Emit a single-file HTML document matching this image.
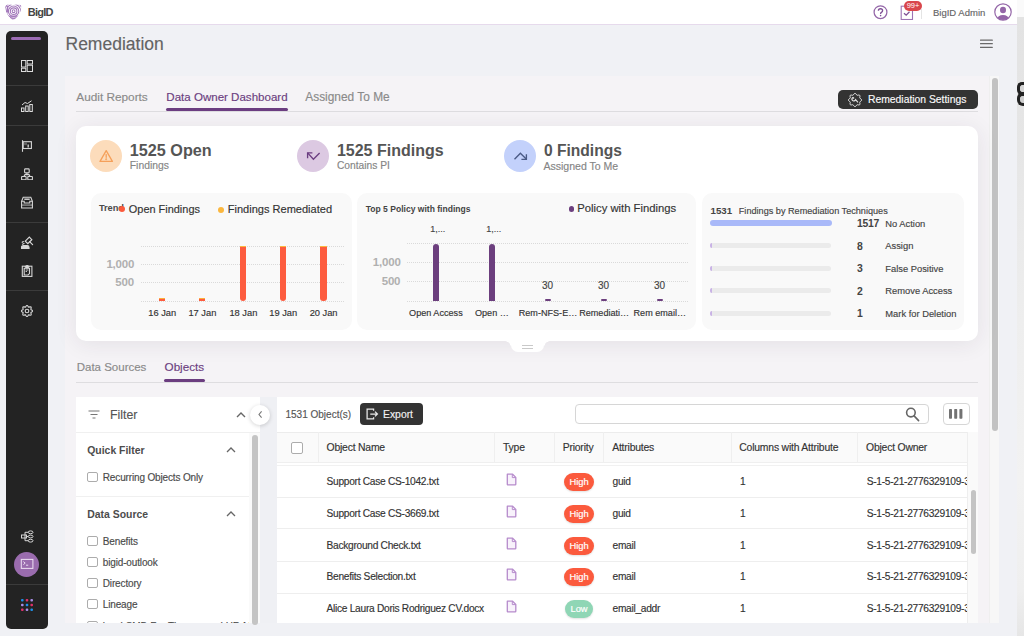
<!DOCTYPE html>
<html><head><meta charset="utf-8">
<style>
*{box-sizing:border-box;margin:0;padding:0}
html,body{width:1024px;height:636px;overflow:hidden}
body{position:relative;background:#f0f1f5;font-family:"Liberation Sans",sans-serif;color:#333}
.a{position:absolute;white-space:nowrap;line-height:1}
.t{-webkit-text-stroke:0.15px currentColor}
.b{font-weight:700}
#top{position:absolute;left:0;top:0;width:1017px;height:25px;background:#fff;border-bottom:1px solid #e6daec}
#rstrip{position:absolute;left:1017px;top:0;width:7px;height:636px;background:linear-gradient(#fafafa 0 17px,#e3e3e3 17px,#e6e6e6 150px,#eeeeee 320px,#f2f2f2 480px,#efefef 590px,#e6e6e6 636px)}
#side{position:absolute;left:6px;top:31px;width:42px;height:598px;background:#232323;border-radius:5px}
.sep{position:absolute;left:0;width:42px;height:1px;background:#3b3b3b}
#panel{position:absolute;left:65px;top:76px;width:925px;height:547px;background:#f5f3f6}
.card{position:absolute;background:#fff;border-radius:10px}
.cc{position:absolute;background:#f9f9f9;border-radius:10px}
.grid{position:absolute;height:1px;background:repeating-linear-gradient(to right,#dadada 0 1px,transparent 1px 2px)}
.bar{position:absolute;border-radius:0 0 3px 3px}
.pbar{position:absolute;background:#6c3f7e;border-radius:3px 3px 0 0}
.tbar{position:absolute;left:710px;width:121px;height:5px;border-radius:3px;background:#ebebeb}
.cb{position:absolute;width:11px;height:11px;border:1.25px solid #acacac;border-radius:2px;background:#fff}
.pill{position:absolute;left:564px;width:30px;height:18px;border-radius:9px;color:#fff;font-size:9.3px;text-align:center;line-height:18px;-webkit-text-stroke:0.2px #fff;box-shadow:0 1px 2px rgba(0,0,0,0.12)}
.hi{background:#fb5a3d}
.lo{background:#8fd6b5;left:565px;width:28px}
.vline{position:absolute;width:1px;background:#efefef}
.hline{position:absolute;height:1px;background:#ececec}
</style></head><body>

<div id="top"></div>
<div id="rstrip"></div><div class="a" style="left:1017px;top:0;width:7px;height:17px;background:#fafafa"></div>
<div class="a" style="left:1016.8px;top:82.3px;width:9px;height:12.5px;border:3px solid #222;border-right:none;border-radius:5px 0 0 5px;background:#d5d5d5"></div><div class="a" style="left:1016.8px;top:93px;width:9px;height:13px;border:3px solid #222;border-right:none;border-radius:5px 0 0 6px;background:#cfcfcf"></div>

<!-- logo -->
<svg class="a" style="left:5.4px;top:3.8px" width="16.4" height="16" viewBox="0 0 16.4 16">
  <defs><clipPath id="hc"><path d="M0.2 1.6 Q4 -0.6 8.2 1.3 Q12.4 -0.6 16.2 1.6 L16 5.5 Q14.8 11.5 8.2 16.3 Q1.6 11.5 0.4 5.5Z"/></clipPath></defs>
  <g clip-path="url(#hc)" fill="none" stroke="#a277ba" stroke-width="1.1">
    <circle cx="8.6" cy="7.2" r="1.4"/><circle cx="8.6" cy="7.2" r="3.3"/><circle cx="8.6" cy="7.2" r="5.2"/><circle cx="8.6" cy="7.2" r="7.1"/><circle cx="8.6" cy="7.2" r="9"/>
    <path d="M2.6 2V8.5"/><path d="M3 12.2H13.5M5 14.2H11.5"/>
  </g>
</svg>
<div class="a b" style="left:27.7px;top:6.9px;font-size:11px;color:#454545;letter-spacing:-0.75px">BigID</div>

<!-- top right -->
<svg class="a" style="left:873px;top:4.8px" width="15" height="15" viewBox="0 0 15 15"><circle cx="7.5" cy="7.2" r="6.4" fill="none" stroke="#9466a8" stroke-width="1.25"/><path d="M5.4 5.7Q5.4 3.7 7.5 3.7Q9.6 3.7 9.6 5.6Q9.6 6.8 8.4 7.4Q7.6 7.8 7.6 8.9" fill="none" stroke="#7f5196" stroke-width="1.35"/><circle cx="7.6" cy="10.6" r="0.8" fill="#7f5196"/></svg>
<svg class="a" style="left:899.5px;top:4.6px" width="14" height="15" viewBox="0 0 14 15" fill="none" stroke="#9d73b4" stroke-width="1.1"><rect x="1.2" y="1.2" width="11.3" height="13.3"/><path d="M4 8.2L6.2 10.2L9.5 6.8" stroke="#7f5196" stroke-width="1.3"/></svg>
<div class="a" style="left:904px;top:1px;width:18px;height:10px;border-radius:5px;background:#d9474c;color:#fff;font-size:7.5px;line-height:10px;text-align:center">99+</div>
<div class="a" style="left:921px;top:9px;width:1px;height:10px;background:#e4e4e4"></div>
<div class="a t" style="left:933px;top:8px;font-size:9.5px;color:#666">BigID Admin</div>
<svg class="a" style="left:994px;top:3px" width="18" height="18" viewBox="0 0 18 18">
  <defs><clipPath id="av"><circle cx="9" cy="9" r="8"/></clipPath></defs>
  <circle cx="9" cy="9" r="8.2" fill="#fff" stroke="#9466a8" stroke-width="1.2"/>
  <g clip-path="url(#av)" fill="#9466a8">
    <ellipse cx="9" cy="7" rx="3" ry="3.3"/>
    <ellipse cx="9" cy="16.5" rx="6" ry="4.5"/>
  </g>
</svg>

<!-- sidebar -->
<div id="side">
  <div class="a" style="left:5px;top:6px;width:30px;height:3px;border-radius:2px;background:#9b6bb4"></div>
  <div class="sep" style="top:54px"></div>
  <div class="sep" style="top:94px"></div>
  <div class="sep" style="top:191px"></div>
  <div class="sep" style="top:259px"></div>
  <div class="sep" style="top:553px"></div>
</div>
<svg class="a" style="left:21px;top:60px" width="12" height="12" viewBox="0 0 12 12" fill="none" stroke="#ddd" stroke-width="1">
  <rect x="0.5" y="0.5" width="4.3" height="6.5"/><rect x="6.2" y="0.5" width="5.3" height="3.5"/><rect x="0.5" y="8.2" width="4.3" height="3.3"/><rect x="6.2" y="5.2" width="5.3" height="6.3"/>
</svg>
<svg class="a" style="left:21px;top:100px" width="12" height="12" viewBox="0 0 12 12" fill="none" stroke="#ddd" stroke-width="1">
  <rect x="0.5" y="8" width="2.5" height="3.5"/><rect x="4.7" y="6" width="2.5" height="5.5"/><rect x="8.8" y="4.5" width="2.5" height="7"/><path d="M1 5L4 2.5L6.5 3.5L10.5 0.8"/>
</svg>
<svg class="a" style="left:21px;top:140px" width="12" height="12" viewBox="0 0 12 12" fill="none" stroke="#d6d6d6" stroke-width="1.1"><path d="M1.5 0.2V11.8"/><rect x="2.2" y="1.7" width="8.2" height="6.8"/><rect x="3" y="2.6" width="3" height="2.6" fill="#d6d6d6" stroke="none" opacity="0.35"/><path d="M7.2 4.5V7.5" stroke-width="1.3"/></svg>
<svg class="a" style="left:21px;top:168px" width="12" height="12" viewBox="0 0 12 12" fill="none" stroke="#d6d6d6" stroke-width="1.1"><rect x="3.6" y="0.9" width="4.6" height="4" rx="0.8"/><rect x="0.6" y="8.5" width="4.5" height="3.3" rx="0.5"/><rect x="6.8" y="8.5" width="4.6" height="3.3" rx="0.5"/><path d="M5.9 4.9V6.6M2.8 8.5L4 6.6H8L9.1 8.5"/></svg>
<svg class="a" style="left:21px;top:196px" width="12" height="13" viewBox="0 0 12 13" fill="none" stroke="#d6d6d6" stroke-width="1.1"><path d="M2.2 1.2H9.8L11.4 5.3V12H0.6V5.3Z"/><path d="M0.6 5.3H3.2V7H8.8V5.3H11.4"/><path d="M3.3 3.2H8.7" stroke-width="1.4"/><rect x="0.6" y="8.3" width="10.8" height="1.6" fill="#d6d6d6" stroke="none" opacity="0.5"/></svg>
<svg class="a" style="left:21px;top:236px" width="13" height="13" viewBox="0 0 13 13" fill="none" stroke="#d6d6d6" stroke-width="1.2" stroke-linecap="round"><path d="M4.3 5.2L8.3 1.2L10.8 3.7L6.8 7.7Z"/><path d="M8.6 5.6L11.6 8.6"/><path d="M1.2 6.3L2.3 5.6M1.5 8.2L3 7.5"/><path d="M0.5 12.6V11.5Q0.5 9.7 2.3 9.7H6.2Q8 9.7 8 11.5V12.6Z" fill="#d6d6d6"/></svg>
<svg class="a" style="left:21px;top:265px" width="12" height="12" viewBox="0 0 12 12" fill="none" stroke="#d6d6d6" stroke-width="1.1"><rect x="1.3" y="1.2" width="9.6" height="10.2"/><path d="M4.2 1.4L6.1 0.5L8 1.4L7.2 2.6H5Z" fill="#d6d6d6"/><path d="M3.2 3.2H8.5V8.6L7 10H3.2Z"/><path d="M4.6 5H7.4M4.6 6.5H6" stroke-width="0.9"/></svg>
<svg class="a" style="left:21px;top:305px" width="12" height="12" viewBox="0 0 12 12" fill="none" stroke="#d6d6d6" stroke-width="1.1"><path d="M11.6 6.0L11.4 6.5L10.8 7.0L10.2 7.3L9.9 7.6L9.9 8.1L10.1 8.7L10.2 9.4L10.0 10.0L9.4 10.2L8.7 10.1L8.1 9.9L7.6 9.9L7.3 10.2L7.0 10.8L6.5 11.4L6.0 11.6L5.5 11.4L5.0 10.8L4.7 10.2L4.4 9.9L3.9 9.9L3.3 10.1L2.6 10.2L2.0 10.0L1.8 9.4L1.9 8.7L2.1 8.1L2.1 7.6L1.8 7.3L1.2 7.0L0.6 6.5L0.4 6.0L0.6 5.5L1.2 5.0L1.8 4.7L2.1 4.4L2.1 3.9L1.9 3.3L1.8 2.6L2.0 2.0L2.6 1.8L3.3 1.9L3.9 2.1L4.4 2.1L4.7 1.8L5.0 1.2L5.5 0.6L6.0 0.4L6.5 0.6L7.0 1.2L7.3 1.8L7.6 2.1L8.1 2.1L8.7 1.9L9.4 1.8L10.0 2.0L10.2 2.6L10.1 3.3L9.9 3.9L9.9 4.4L10.2 4.7L10.8 5.0L11.4 5.5Z"/><circle cx="6" cy="6" r="1.8"/></svg>
<svg class="a" style="left:21px;top:530px" width="13" height="13" viewBox="0 0 13 13" fill="none" stroke="#d6d6d6" stroke-width="1"><rect x="0.5" y="5" width="5" height="3"/><path d="M5.5 6.5H9M4 2.3V10.7H9M4 2.3H9"/><ellipse cx="9.6" cy="2.3" rx="2.4" ry="1.4" fill="#222"/><ellipse cx="9.6" cy="6.5" rx="2.4" ry="1.4" fill="#222"/><ellipse cx="9.6" cy="10.7" rx="2.4" ry="1.4" fill="#222"/></svg>
<div class="a" style="left:14px;top:552px;width:25px;height:25px;border-radius:50%;background:#9a6cae"></div>
<svg class="a" style="left:20px;top:558px" width="14" height="12" viewBox="0 0 14 12" fill="none" stroke="#eadcf0" stroke-width="1.05"><rect x="1.3" y="1.4" width="11.6" height="9"/><path d="M3.4 3.6L5.2 5.1L3.4 6.6" stroke-width="1"/><path d="M6 7.2H8.2" stroke-width="1"/></svg>
<svg class="a" style="left:21px;top:599px" width="12" height="12" viewBox="0 0 12 12">
  <rect x="0" y="0" width="2.6" height="2.6" rx="1" fill="#1e90e8"/><rect x="4.7" y="0" width="2.6" height="2.6" rx="1" fill="#e0306a"/><rect x="9.4" y="0" width="2.6" height="2.6" rx="1" fill="#a88ee8"/>
  <rect x="0" y="4.7" width="2.6" height="2.6" rx="1" fill="#a88ee8"/><rect x="4.7" y="4.7" width="2.6" height="2.6" rx="1" fill="#1e90e8"/><rect x="9.4" y="4.7" width="2.6" height="2.6" rx="1" fill="#e0306a"/>
  <rect x="0" y="9.4" width="2.6" height="2.6" rx="1" fill="#e0306a"/><rect x="4.7" y="9.4" width="2.6" height="2.6" rx="1" fill="#a88ee8"/><rect x="9.4" y="9.4" width="2.6" height="2.6" rx="1" fill="#1e90e8"/>
</svg>

<!-- title -->
<div class="a t" style="left:65.5px;top:36.1px;font-size:17.5px;color:#636363">Remediation</div>
<svg class="a" style="left:979.5px;top:38px" width="13" height="11" viewBox="0 0 13 11" stroke="#6a6a6a" stroke-width="1.3" stroke-linecap="round">
  <path d="M0.5 2.2H12.3M0.5 5.7H12.3M0.5 9.3H12.3"/>
</svg>

<!-- panel -->
<div id="panel"></div>


<!-- tabs -->
<div class="a t" style="left:76.3px;top:91.8px;font-size:11.8px;color:#8a8a8a">Audit Reports</div>
<div class="a t" style="left:166.3px;top:91.8px;font-size:11.55px;color:#6b3d80">Data Owner Dashboard</div>
<div class="a t" style="left:305.3px;top:91.8px;font-size:11.9px;color:#8a8a8a">Assigned To Me</div>
<div class="a" style="left:76px;top:111px;width:902px;height:1px;background:#dedde0"></div>
<div class="a" style="left:166px;top:108.3px;width:122px;height:3px;border-radius:2px;background:#6b3d80"></div>

<!-- settings button -->
<div class="a" style="left:837.5px;top:89.9px;width:140.7px;height:19.2px;border-radius:5px;background:#333"></div>
<svg class="a" style="left:848.4px;top:92.9px" width="14" height="14" viewBox="0 0 14 14" fill="none" stroke="#e6e6e6" stroke-width="1"><path d="M13.7 7.0L13.4 7.6L12.8 8.2L12.1 8.6L11.8 9.0L11.7 9.5L11.9 10.3L12.0 11.1L11.7 11.7L11.1 12.0L10.3 11.9L9.5 11.7L9.0 11.8L8.6 12.1L8.2 12.8L7.6 13.4L7.0 13.7L6.4 13.4L5.8 12.8L5.4 12.1L5.0 11.8L4.5 11.7L3.7 11.9L2.9 12.0L2.3 11.7L2.0 11.1L2.1 10.3L2.3 9.5L2.2 9.0L1.9 8.6L1.2 8.2L0.6 7.6L0.3 7.0L0.6 6.4L1.2 5.8L1.9 5.4L2.2 5.0L2.3 4.5L2.1 3.7L2.0 2.9L2.3 2.3L2.9 2.0L3.7 2.1L4.5 2.3L5.0 2.2L5.4 1.9L5.8 1.2L6.4 0.6L7.0 0.3L7.6 0.6L8.2 1.2L8.6 1.9L9.0 2.2L9.5 2.3L10.3 2.1L11.1 2.0L11.7 2.3L12.0 2.9L11.9 3.7L11.7 4.5L11.8 5.0L12.1 5.4L12.8 5.8L13.4 6.4Z"/><path d="M5.2 4.3A1.9 1.9 0 1 0 7.6 6.7L10 9.3" stroke-width="1.2"/><path d="M4.5 5.6L5.8 5.3L5.5 4.1" stroke-width="0.9"/></svg>
<div class="a t" style="left:868px;top:94.6px;font-size:10.35px;color:#fafafa">Remediation Settings</div>

<!-- outer scrollbar -->
<div class="a" style="left:989.3px;top:76px;width:10px;height:547px;background:#f7f7f7;border-left:1px solid #efefef"></div>
<div class="a" style="left:992px;top:78px;width:6px;height:353px;border-radius:3px;background:#c2c2c2"></div>

<!-- stat card -->
<div class="card" style="left:76px;top:126px;width:902px;height:215px;box-shadow:0 3px 22px rgba(50,30,60,0.085)"></div>
<div class="a" style="left:511px;top:336px;width:33px;height:16px;background:#fff;border-radius:0 0 7px 7px"></div>
<div class="a" style="left:505px;top:340.5px;width:6px;height:6px;background:radial-gradient(circle at 0 100%,rgba(255,255,255,0) 5.5px,#fff 6px)"></div><div class="a" style="left:544px;top:340.5px;width:6px;height:6px;background:radial-gradient(circle at 100% 100%,rgba(255,255,255,0) 5.5px,#fff 6px)"></div>
<div class="a" style="left:522px;top:345px;width:11px;height:1.3px;background:#c9c9c9"></div>
<div class="a" style="left:522px;top:348px;width:11px;height:1.3px;background:#c9c9c9"></div>

<div class="a" style="left:90px;top:140px;width:32px;height:32px;border-radius:50%;background:#fcdcbb"></div>
<svg class="a" style="left:96px;top:146px" width="20" height="20" viewBox="96 146 20 20" fill="none" stroke="#f5a05a" stroke-width="1.3" stroke-linejoin="round" stroke-linecap="round"><path d="M106.2 150.6L112.4 161.4H100Z"/><path d="M106.2 154.6V157.3"/><circle cx="106.2" cy="159.3" r="0.35"/></svg>
<div class="a b" style="left:129.8px;top:142.2px;font-size:16.2px;color:#555">1525 Open</div>
<div class="a t" style="left:129.8px;top:160.8px;font-size:10.35px;color:#858585">Findings</div>

<div class="a" style="left:297px;top:140px;width:32px;height:32px;border-radius:50%;background:#dcc9e2"></div>
<svg class="a" style="left:303px;top:146px" width="20" height="20" viewBox="303 146 20 20" fill="none" stroke="#6b3d80" stroke-width="1.35"><path d="M312.4 152.9H307.6V158.3"/><path d="M307.6 152.9L313.4 159.2L319.6 153.1"/></svg>
<div class="a b" style="left:336.9px;top:143.3px;font-size:16px;color:#555">1525 Findings</div>
<div class="a t" style="left:336.9px;top:160.8px;font-size:10.25px;color:#858585">Contains PI</div>

<div class="a" style="left:504px;top:140px;width:32px;height:32px;border-radius:50%;background:#c3d1fb"></div>
<svg class="a" style="left:510px;top:146px" width="20" height="20" viewBox="510 146 20 20" fill="none" stroke="#4a5a85" stroke-width="1.35"><path d="M514.5 159.3L520.4 153.3L526.2 159"/><path d="M526.4 154.2V159.3H521.4"/></svg>
<div class="a b" style="left:543.9px;top:143.3px;font-size:15.6px;color:#555">0 Findings</div>
<div class="a t" style="left:543.4px;top:160.8px;font-size:10.55px;color:#858585">Assigned To Me</div>

<!-- chart card 1 -->
<div class="cc" style="left:90.5px;top:193px;width:261.5px;height:137px"></div>
<div class="a b" style="left:99px;top:204.2px;font-size:9.3px;color:#4a4a4a;letter-spacing:-0.1px">Trend</div>
<div class="a" style="left:119.2px;top:206px;width:6px;height:6px;border-radius:50%;background:#fb5a3c"></div>
<div class="a t" style="left:128.8px;top:203.8px;font-size:10.95px;color:#333">Open Findings</div>
<div class="a" style="left:218px;top:206.5px;width:6px;height:6px;border-radius:50%;background:#fbb73e"></div>
<div class="a t" style="left:227.7px;top:203.8px;font-size:11.05px;color:#333">Findings Remediated</div>
<div class="grid" style="left:141px;top:245.5px;width:203px"></div>
<div class="grid" style="left:141px;top:264px;width:203px"></div>
<div class="grid" style="left:141px;top:282.3px;width:203px"></div>
<div class="grid" style="left:141px;top:300.8px;width:203px"></div>
<div class="a b" style="left:106.4px;top:258.5px;font-size:11.5px;color:#b0b0b0;letter-spacing:-0.2px">1,000</div>
<div class="a b" style="left:115.3px;top:276.7px;font-size:11.5px;color:#b0b0b0;letter-spacing:-0.2px">500</div>
<div class="bar" style="left:240.2px;top:245.5px;width:6.3px;height:55.5px;background:#fd5c3f;border-top:1px solid #fbb73e"></div>
<div class="bar" style="left:279.8px;top:245.5px;width:6.3px;height:55.5px;background:#fd5c3f;border-top:1px solid #fbb73e"></div>
<div class="bar" style="left:320.4px;top:245.5px;width:6.3px;height:55.5px;background:#fd5c3f;border-top:1px solid #fbb73e"></div>
<div class="a" style="left:159px;top:298.3px;width:6.3px;height:3.2px;background:linear-gradient(#fbb03c 0 45%,#fd5c3f 45%)"></div>
<div class="a" style="left:199px;top:298.3px;width:6.3px;height:3.2px;background:linear-gradient(#fbb03c 0 45%,#fd5c3f 45%)"></div>
<div class="a t" style="left:142.2px;top:308.5px;width:40px;text-align:center;font-size:9.3px;color:#333">16 Jan</div>
<div class="a t" style="left:182.4px;top:308.5px;width:40px;text-align:center;font-size:9.3px;color:#333">17 Jan</div>
<div class="a t" style="left:223.4px;top:308.5px;width:40px;text-align:center;font-size:9.3px;color:#333">18 Jan</div>
<div class="a t" style="left:263.2px;top:308.5px;width:40px;text-align:center;font-size:9.3px;color:#333">19 Jan</div>
<div class="a t" style="left:303.6px;top:308.5px;width:40px;text-align:center;font-size:9.3px;color:#333">20 Jan</div>

<!-- chart card 2 -->
<div class="cc" style="left:357px;top:193px;width:339px;height:137px"></div>
<div class="a b" style="left:365.7px;top:205px;font-size:8.55px;color:#444">Top 5 Policy with findings</div>
<div class="a" style="left:568.7px;top:206px;width:5.5px;height:5.5px;border-radius:50%;background:#6c3f7e"></div>
<div class="a t" style="left:577.3px;top:203.3px;font-size:11.25px;color:#333">Policy with Findings</div>
<div class="grid" style="left:407px;top:242.5px;width:281px"></div>
<div class="grid" style="left:407px;top:262px;width:281px"></div>
<div class="grid" style="left:407px;top:281.3px;width:281px"></div>
<div class="grid" style="left:407px;top:300.5px;width:281px"></div>
<div class="a b" style="left:372.8px;top:256.5px;font-size:11.5px;color:#b0b0b0;letter-spacing:-0.2px">1,000</div>
<div class="a b" style="left:381.7px;top:275.8px;font-size:11.5px;color:#b0b0b0;letter-spacing:-0.2px">500</div>
<div class="pbar" style="left:432.8px;top:243.5px;width:6.2px;height:57px"></div>
<div class="pbar" style="left:488.8px;top:243.5px;width:6.2px;height:57px"></div>
<div class="pbar" style="left:544.8px;top:298.5px;width:6.2px;height:2px;border-radius:1px"></div>
<div class="pbar" style="left:600.7px;top:298.5px;width:6.2px;height:2px;border-radius:1px"></div>
<div class="pbar" style="left:656.7px;top:298.5px;width:6.2px;height:2px;border-radius:1px"></div>
<div class="a t" style="left:430.2px;top:225px;font-size:9px;color:#444">1,...</div>
<div class="a t" style="left:486.2px;top:225px;font-size:9px;color:#444">1,...</div>
<div class="a t" style="left:542px;top:281px;font-size:10px;color:#444">30</div>
<div class="a t" style="left:598px;top:281px;font-size:10px;color:#444">30</div>
<div class="a t" style="left:654px;top:281px;font-size:10px;color:#444">30</div>
<div class="a t" style="left:405.9px;top:308.5px;width:60px;text-align:center;font-size:9.1px;color:#333">Open Access</div>
<div class="a t" style="left:461.9px;top:308.5px;width:60px;text-align:center;font-size:9.1px;color:#333">Open …</div>
<div class="a t" style="left:518.0px;top:308.5px;width:60px;text-align:center;font-size:9.1px;color:#333">Rem-NFS-E…</div>
<div class="a t" style="left:574.2px;top:308.5px;width:60px;text-align:center;font-size:9.1px;color:#333">Remediati…</div>
<div class="a t" style="left:629.8px;top:308.5px;width:60px;text-align:center;font-size:9.1px;color:#333">Rem email…</div>

<!-- chart card 3 -->
<div class="cc" style="left:702px;top:193px;width:262px;height:137px"></div>
<div class="a b" style="left:710.6px;top:206.4px;font-size:9.7px;color:#444">1531</div>
<div class="a t" style="left:738.8px;top:207px;font-size:9.13px;color:#444">Findings by Remediation Techniques</div>
<div class="a" style="left:710px;top:220px;width:121.5px;height:5.5px;border-radius:3px;background:#a9b9f9"></div>
<div class="tbar" style="top:243px"></div><div class="a" style="left:710px;top:243px;width:2px;height:5px;border-radius:2px 0 0 2px;background:#c9b3e6"></div>
<div class="tbar" style="top:265.5px"></div><div class="a" style="left:710px;top:265.5px;width:2px;height:5px;border-radius:2px 0 0 2px;background:#c9b3e6"></div>
<div class="tbar" style="top:288px"></div><div class="a" style="left:710px;top:288px;width:2px;height:5px;border-radius:2px 0 0 2px;background:#c9b3e6"></div>
<div class="tbar" style="top:310.5px"></div><div class="a" style="left:710px;top:310.5px;width:2px;height:5px;border-radius:2px 0 0 2px;background:#c9b3e6"></div>
<div class="a b" style="left:857px;top:218.9px;font-size:10.4px;letter-spacing:-0.25px;color:#444">1517</div>
<div class="a t" style="left:885.3px;top:219.9px;font-size:9.35px;color:#444">No Action</div>
<div class="a b" style="left:857px;top:241.5px;font-size:10.4px;letter-spacing:-0.25px;color:#444">8</div>
<div class="a t" style="left:885.3px;top:242.0px;font-size:9.35px;color:#444">Assign</div>
<div class="a b" style="left:857px;top:264.0px;font-size:10.4px;letter-spacing:-0.25px;color:#444">3</div>
<div class="a t" style="left:885.3px;top:265.0px;font-size:9.35px;color:#444">False Positive</div>
<div class="a b" style="left:857px;top:286.5px;font-size:10.4px;letter-spacing:-0.25px;color:#444">2</div>
<div class="a t" style="left:885.3px;top:287.0px;font-size:9.35px;color:#444">Remove Access</div>
<div class="a b" style="left:857px;top:309.0px;font-size:10.4px;letter-spacing:-0.25px;color:#444">1</div>
<div class="a t" style="left:885.3px;top:310.0px;font-size:9.35px;color:#444">Mark for Deletion</div>


<!-- lower tabs -->
<div class="a t" style="left:76.7px;top:361.7px;font-size:11.5px;color:#8a8a8a">Data Sources</div>
<div class="a t" style="left:164.6px;top:361.2px;font-size:11.65px;color:#6b3d80">Objects</div>
<div class="a" style="left:76px;top:382px;width:902px;height:1px;background:#dedde0"></div>
<div class="a" style="left:164px;top:379px;width:41px;height:3px;border-radius:2px;background:#6b3d80"></div>

<!-- filter panel -->
<div class="a" style="left:76px;top:396.5px;width:184px;height:226px;background:#fff"></div>
<div class="a" style="left:260px;top:396.5px;width:17px;height:226.5px;background:#eff0f4"></div>
<svg class="a" style="left:88px;top:410px" width="12" height="9" viewBox="0 0 12 9" stroke="#777" stroke-width="1.2"><path d="M0.5 1H11.5M2.5 4.5H9.5M4.5 8H7.5"/></svg>
<div class="a t" style="left:110px;top:409.2px;font-size:12.3px;color:#555">Filter</div>
<svg class="a" style="left:235.5px;top:411px" width="10" height="7" viewBox="0 0 10 7" fill="none" stroke="#666" stroke-width="1.4"><path d="M1 6L5 2L9 6"/></svg>
<div class="hline" style="left:76px;top:432px;width:184px;background:#f0f0f0"></div>
<div class="a" style="left:250px;top:404.6px;width:20px;height:20px;border-radius:50%;background:#fff;box-shadow:0 1px 4px rgba(0,0,0,0.18)"></div>
<svg class="a" style="left:256px;top:410px" width="8" height="9" viewBox="0 0 8 9" fill="none" stroke="#777" stroke-width="1.1"><path d="M5.6 1.3L3 4.5L5.6 7.7"/></svg>
<div class="a" style="left:249px;top:433px;width:11px;height:190px;background:#fafafa"></div>
<div class="a" style="left:252px;top:435px;width:5.5px;height:190px;border-radius:3px;background:#c4c4c4"></div>

<div class="a b" style="left:87.2px;top:445.7px;font-size:10.45px;color:#4c4c4c">Quick Filter</div>
<svg class="a" style="left:226px;top:445.8px" width="10" height="7" viewBox="0 0 10 7" fill="none" stroke="#666" stroke-width="1.3"><path d="M1 6L5 2L9 6"/></svg>
<div class="cb" style="left:87.2px;top:471.9px;width:10.5px;height:10px"></div>
<div class="a t" style="left:102.8px;top:473.0px;font-size:10px;letter-spacing:-0.15px;color:#4a4a4a">Recurring Objects Only</div>
<div class="hline" style="left:76px;top:496.4px;width:173px;background:#f0f0f0"></div>
<div class="a b" style="left:87.2px;top:510.4px;font-size:10.45px;color:#4c4c4c">Data Source</div>
<svg class="a" style="left:226px;top:509.8px" width="10" height="7" viewBox="0 0 10 7" fill="none" stroke="#666" stroke-width="1.3"><path d="M1 6L5 2L9 6"/></svg>
<div class="cb" style="left:87.2px;top:536.3px;width:10.5px;height:10px"></div>
<div class="a t" style="left:102.8px;top:537.1px;font-size:10px;letter-spacing:-0.15px;color:#4a4a4a">Benefits</div>
<div class="cb" style="left:87.2px;top:557.4px;width:10.5px;height:10px"></div>
<div class="a t" style="left:102.8px;top:558.1px;font-size:10px;letter-spacing:-0.15px;color:#4a4a4a">bigid-outlook</div>
<div class="cb" style="left:87.2px;top:578.4px;width:10.5px;height:10px"></div>
<div class="a t" style="left:102.8px;top:579.1px;font-size:10px;letter-spacing:-0.15px;color:#4a4a4a">Directory</div>
<div class="cb" style="left:87.2px;top:599.4px;width:10.5px;height:10px"></div>
<div class="a t" style="left:102.8px;top:600.1px;font-size:10px;letter-spacing:-0.15px;color:#4a4a4a">Lineage</div>
<div class="a" style="left:76px;top:620.5px;width:173px;height:2.2px;overflow:hidden">
  <div class="cb" style="left:11.2px;top:0px;width:10.5px;height:10px"></div>
  <div class="a t" style="left:26.8px;top:1.1px;font-size:10px;letter-spacing:-0.15px;color:#4a4a4a">local-SMB-For-Thomas-and-HR-M</div>
</div>

<!-- table panel -->
<div class="a" style="left:277px;top:396.5px;width:701px;height:226.5px;background:#fff"></div>
<div class="a t" style="left:285.5px;top:409.6px;font-size:10px;color:#555">1531 Object(s)</div>
<div class="a" style="left:360px;top:402.9px;width:62.5px;height:22.2px;border-radius:4px;background:#333"></div>
<svg class="a" style="left:366.3px;top:408.3px" width="13" height="12" viewBox="0 0 13 12" fill="none" stroke="#eaeaea" stroke-width="1.25"><path d="M7.6 2.8V1.1H1.1V10.9H7.6V9.2"/><path d="M4.3 6H11.4M9 3.6L11.4 6L9 8.4"/></svg>
<div class="a t" style="left:383px;top:410.4px;font-size:10.38px;color:#f2f2f2">Export</div>
<div class="a" style="left:575px;top:404.2px;width:353.5px;height:19.8px;border:1px solid #d6d6d6;border-radius:4px;background:#fff"></div>
<svg class="a" style="left:905px;top:406.5px" width="15" height="15" viewBox="0 0 15 15" fill="none" stroke="#666" stroke-width="1.6" stroke-linecap="round"><circle cx="5.9" cy="5.6" r="4.3"/><path d="M9.1 8.9L13.6 13.6"/></svg>
<div class="a" style="left:943px;top:403px;width:26.5px;height:22.3px;border:1px solid #d6d6d6;border-radius:4px;background:#fff"></div>
<svg class="a" style="left:949px;top:409.3px" width="14" height="10" viewBox="0 0 14 10" fill="#727272"><rect x="0" y="0" width="3" height="9.8" rx="0.7"/><rect x="5.2" y="0" width="3" height="9.8" rx="0.7"/><rect x="10.4" y="0" width="3" height="9.8" rx="0.7"/></svg>

<div class="a" style="left:277px;top:432px;width:690px;height:30px;background:#fafafa;border-top:1px solid #ececec"></div>
<div class="hline" style="left:277px;top:461.5px;width:690px;background:#efefef"></div>
<div class="hline" style="left:277px;top:465.3px;width:690px;background:#f1f1f1"></div>
<div class="vline" style="left:317.5px;top:432px;height:30px"></div>
<div class="vline" style="left:493.5px;top:432px;height:30px"></div>
<div class="vline" style="left:553.5px;top:432px;height:30px"></div>
<div class="vline" style="left:603px;top:432px;height:30px"></div>
<div class="vline" style="left:730.7px;top:432px;height:30px"></div>
<div class="vline" style="left:857px;top:432px;height:30px"></div>
<div class="cb" style="left:291.4px;top:442px;width:12px;height:11.5px"></div>
<div class="a t" style="left:326.5px;top:443px;font-size:10.4px;letter-spacing:-0.2px;color:#333">Object Name</div>
<div class="a t" style="left:503px;top:443px;font-size:10.4px;letter-spacing:-0.2px;color:#333">Type</div>
<div class="a t" style="left:562.7px;top:443px;font-size:10.4px;letter-spacing:-0.2px;color:#333">Priority</div>
<div class="a t" style="left:612.2px;top:443px;font-size:10.4px;letter-spacing:-0.2px;color:#333">Attributes</div>
<div class="a t" style="left:739.3px;top:443px;font-size:10.4px;letter-spacing:-0.2px;color:#333">Columns with Attribute</div>
<div class="a t" style="left:866px;top:443px;font-size:10.4px;letter-spacing:-0.2px;color:#333">Object Owner</div>
<div class="a" style="left:967px;top:432px;width:11px;height:191px;background:#fafafa;border-left:1px solid #eee"></div>
<div class="a" style="left:970.5px;top:490px;width:5.5px;height:64px;border-radius:3px;background:#c4c4c4"></div>
<div class="a t" style="left:326.5px;top:477.2px;font-size:10.2px;letter-spacing:-0.28px;color:#333">Support Case CS-1042.txt</div>
<svg class="a" style="left:506px;top:473.2px" width="11" height="13" viewBox="0 0 11 13" fill="#f8f2fb" stroke="#b68bcc" stroke-width="1.3" stroke-linejoin="round"><path d="M1.3 1.2H6.6L9.8 4.4V11.2Q9.8 11.9 9.1 11.9H2Q1.3 11.9 1.3 11.2Z"/><path d="M6.3 1.4V4.6H9.6" fill="none" stroke-width="1"/></svg>
<div class="pill hi" style="top:473.0px">High</div>
<div class="a t" style="left:612.5px;top:477.2px;font-size:10.2px;letter-spacing:-0.28px;color:#333">guid</div>
<div class="a t" style="left:740px;top:477.2px;font-size:10.2px;letter-spacing:-0.28px;color:#333">1</div>
<div class="a t" style="left:866.7px;top:477.2px;font-size:10.2px;letter-spacing:-0.28px;color:#333;width:100px;overflow:hidden">S-1-5-21-2776329109-3401</div>
<div class="a t" style="left:326.5px;top:509.3px;font-size:10.2px;letter-spacing:-0.28px;color:#333">Support Case CS-3669.txt</div>
<svg class="a" style="left:506px;top:505.3px" width="11" height="13" viewBox="0 0 11 13" fill="#f8f2fb" stroke="#b68bcc" stroke-width="1.3" stroke-linejoin="round"><path d="M1.3 1.2H6.6L9.8 4.4V11.2Q9.8 11.9 9.1 11.9H2Q1.3 11.9 1.3 11.2Z"/><path d="M6.3 1.4V4.6H9.6" fill="none" stroke-width="1"/></svg>
<div class="pill hi" style="top:505.1px">High</div>
<div class="a t" style="left:612.5px;top:509.3px;font-size:10.2px;letter-spacing:-0.28px;color:#333">guid</div>
<div class="a t" style="left:740px;top:509.3px;font-size:10.2px;letter-spacing:-0.28px;color:#333">1</div>
<div class="a t" style="left:866.7px;top:509.3px;font-size:10.2px;letter-spacing:-0.28px;color:#333;width:100px;overflow:hidden">S-1-5-21-2776329109-3401</div>
<div class="a t" style="left:326.5px;top:541.0px;font-size:10.2px;letter-spacing:-0.28px;color:#333">Background Check.txt</div>
<svg class="a" style="left:506px;top:537.0px" width="11" height="13" viewBox="0 0 11 13" fill="#f8f2fb" stroke="#b68bcc" stroke-width="1.3" stroke-linejoin="round"><path d="M1.3 1.2H6.6L9.8 4.4V11.2Q9.8 11.9 9.1 11.9H2Q1.3 11.9 1.3 11.2Z"/><path d="M6.3 1.4V4.6H9.6" fill="none" stroke-width="1"/></svg>
<div class="pill hi" style="top:536.8px">High</div>
<div class="a t" style="left:612.5px;top:541.0px;font-size:10.2px;letter-spacing:-0.28px;color:#333">email</div>
<div class="a t" style="left:740px;top:541.0px;font-size:10.2px;letter-spacing:-0.28px;color:#333">1</div>
<div class="a t" style="left:866.7px;top:541.0px;font-size:10.2px;letter-spacing:-0.28px;color:#333;width:100px;overflow:hidden">S-1-5-21-2776329109-3401</div>
<div class="a t" style="left:326.5px;top:572.4px;font-size:10.2px;letter-spacing:-0.28px;color:#333">Benefits Selection.txt</div>
<svg class="a" style="left:506px;top:568.4px" width="11" height="13" viewBox="0 0 11 13" fill="#f8f2fb" stroke="#b68bcc" stroke-width="1.3" stroke-linejoin="round"><path d="M1.3 1.2H6.6L9.8 4.4V11.2Q9.8 11.9 9.1 11.9H2Q1.3 11.9 1.3 11.2Z"/><path d="M6.3 1.4V4.6H9.6" fill="none" stroke-width="1"/></svg>
<div class="pill hi" style="top:568.2px">High</div>
<div class="a t" style="left:612.5px;top:572.4px;font-size:10.2px;letter-spacing:-0.28px;color:#333">email</div>
<div class="a t" style="left:740px;top:572.4px;font-size:10.2px;letter-spacing:-0.28px;color:#333">1</div>
<div class="a t" style="left:866.7px;top:572.4px;font-size:10.2px;letter-spacing:-0.28px;color:#333;width:100px;overflow:hidden">S-1-5-21-2776329109-3401</div>
<div class="a t" style="left:326.5px;top:604.2px;font-size:10.2px;letter-spacing:-0.28px;color:#333">Alice Laura Doris Rodriguez CV.docx</div>
<svg class="a" style="left:506px;top:600.2px" width="11" height="13" viewBox="0 0 11 13" fill="#f8f2fb" stroke="#b68bcc" stroke-width="1.3" stroke-linejoin="round"><path d="M1.3 1.2H6.6L9.8 4.4V11.2Q9.8 11.9 9.1 11.9H2Q1.3 11.9 1.3 11.2Z"/><path d="M6.3 1.4V4.6H9.6" fill="none" stroke-width="1"/></svg>
<div class="pill lo" style="top:600.0px">Low</div>
<div class="a t" style="left:612.5px;top:604.2px;font-size:10.2px;letter-spacing:-0.28px;color:#333">email_addr</div>
<div class="a t" style="left:740px;top:604.2px;font-size:10.2px;letter-spacing:-0.28px;color:#333">1</div>
<div class="a t" style="left:866.7px;top:604.2px;font-size:10.2px;letter-spacing:-0.28px;color:#333;width:100px;overflow:hidden">S-1-5-21-2776329109-3401</div>
<div class="hline" style="left:277px;top:496.8px;width:690px;background:#eeeeee"></div>
<div class="hline" style="left:277px;top:528.4px;width:690px;background:#eeeeee"></div>
<div class="hline" style="left:277px;top:560.5px;width:690px;background:#eeeeee"></div>
<div class="hline" style="left:277px;top:592.5px;width:690px;background:#eeeeee"></div>

</body></html>
